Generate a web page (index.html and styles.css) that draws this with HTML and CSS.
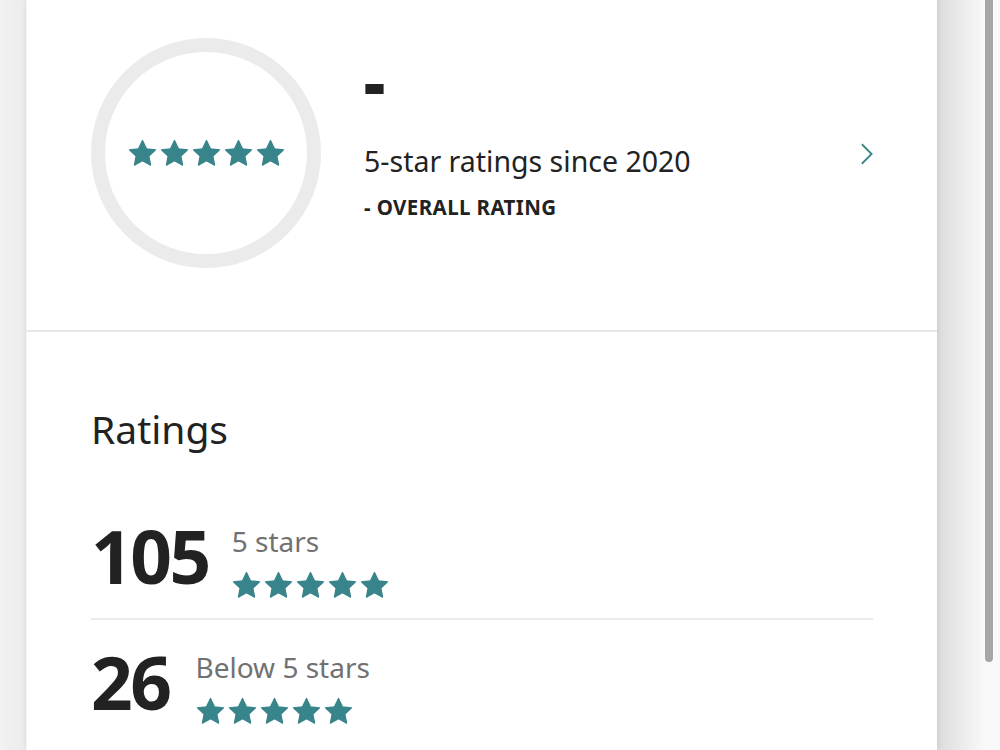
FILE: index.html
```html
<!DOCTYPE html>
<html lang="en">

<head>
  <meta charset="UTF-8">
  <title>Reviews</title>
  <link rel="stylesheet" href="styles.css">
</head>

<body>
  <svg width="0" height="0" class="defs">
    <symbol id="star" viewBox="0 0 24 24">
      <path d="M12 1.2l3.3 6.9 7.5.9-5.5 5.2 1.4 7.4L12 18 5.3 21.6l1.4-7.4L1.2 9l7.5-.9z" />
    </symbol>
  </svg>

  <div class="page">
    <div class="card">
      <!-- overall score -->
      <div class="overview">
        <div class="ring">
          <div class="stars stars-ring">
            <svg><use href="#star"></use></svg>
            <svg><use href="#star"></use></svg>
            <svg><use href="#star"></use></svg>
            <svg><use href="#star"></use></svg>
            <svg><use href="#star"></use></svg>
          </div>
        </div>
        <div class="summary">
          <div class="score">-</div>
          <div class="since">5-star ratings since 2020</div>
          <div class="overall">- OVERALL RATING</div>
        </div>
        <svg class="chevron" viewBox="0 0 14 24">
          <path d="M2 1.5l10.5 10.5L2 22.5" />
        </svg>
      </div>

      <!-- breakdown -->
      <div class="ratings">
        <h2 class="title">Ratings</h2>

        <div class="row">
          <div class="count">105</div>
          <div class="detail">
            <div class="label">5 stars</div>
            <div class="stars">
              <svg><use href="#star"></use></svg>
              <svg><use href="#star"></use></svg>
              <svg><use href="#star"></use></svg>
              <svg><use href="#star"></use></svg>
              <svg><use href="#star"></use></svg>
            </div>
          </div>
        </div>

        <div class="row">
          <div class="count">26</div>
          <div class="detail">
            <div class="label">Below 5 stars</div>
            <div class="stars">
              <svg><use href="#star"></use></svg>
              <svg><use href="#star"></use></svg>
              <svg><use href="#star"></use></svg>
              <svg><use href="#star"></use></svg>
              <svg><use href="#star"></use></svg>
            </div>
          </div>
        </div>
      </div>
    </div>
    <div class="scrollbar"></div>
  </div>
</body>

</html>
```

FILE: styles.css
```css
html,
body {
  margin: 0;
  height: 100%;
  overflow: hidden;
}

body {
  background: linear-gradient(to right, #f2f2f2 0, #ebebeb 26px, #fff 26px, #fff 937px, #dcdcdc 937px, #f9f9f9 985px);
  font-family: "Noto Sans", "Liberation Sans", sans-serif;
  color: #222;
}

.defs {
  position: absolute;
}

.page {
  display: flex;
  height: 100%;
  padding-left: 27px;
}

.card {
  width: 910px;
  background: #fff;
  box-shadow: 0 0 6px rgba(0, 0, 0, 0.1);
}

/* top block */
.overview {
  display: flex;
  align-items: flex-start;
  height: 332px;
  padding: 38px 64px 0 64px;
  box-sizing: border-box;
  border-bottom: 2px solid #e8e8e8;
}

.ring {
  width: 230px;
  height: 230px;
  box-sizing: border-box;
  border: 14px solid #ebebeb;
  border-radius: 50%;
  display: flex;
  align-items: center;
  justify-content: center;
  flex-shrink: 0;
}

.stars {
  display: flex;
  gap: 3px;
  fill: #37848a;
  stroke: #37848a;
  stroke-width: 1;
  stroke-linejoin: round;
}

.stars svg {
  width: 29px;
  height: 29px;
}

.summary {
  margin-left: 43px;
  flex: 1;
}

.score {
  font-size: 66px;
  font-weight: 900;
  line-height: 1;
  margin-top: 10px;
}

.since {
  font-size: 28.5px;
  margin-top: 30px;
  line-height: 1.2;
}

.overall {
  font-size: 20.5px;
  font-weight: 700;
  letter-spacing: 0.4px;
  margin-top: 15px;
}

.chevron {
  width: 13px;
  height: 24px;
  margin-top: 104px;
  fill: none;
  stroke: #3a8589;
  stroke-width: 2;
}

/* rating rows */
.ratings {
  padding: 0 64px 0 64px;
}

.title {
  font-size: 39px;
  font-weight: 400;
  margin: 70px 0 54px;
}

.row {
  display: flex;
  align-items: flex-start;
  padding: 10px 0 18px;
}

.row + .row {
  border-top: 2px solid #ebebeb;
  padding-top: 25px;
}

.count {
  font-size: 73px;
  font-weight: 700;
  letter-spacing: -2.5px;
  line-height: 1;
  margin-right: 23px;
}

.row + .row .count {
  margin-right: 26px;
}

.detail {
  padding-top: 8px;
}

.label {
  font-size: 28px;
  color: #717171;
  line-height: 1;
  margin-bottom: 16px;
}

.scrollbar {
  position: absolute;
  left: 985px;
  top: 0;
  width: 8px;
  height: 662px;
  background: #a6a6a6;
  border-radius: 0 0 4px 4px;
}
```
